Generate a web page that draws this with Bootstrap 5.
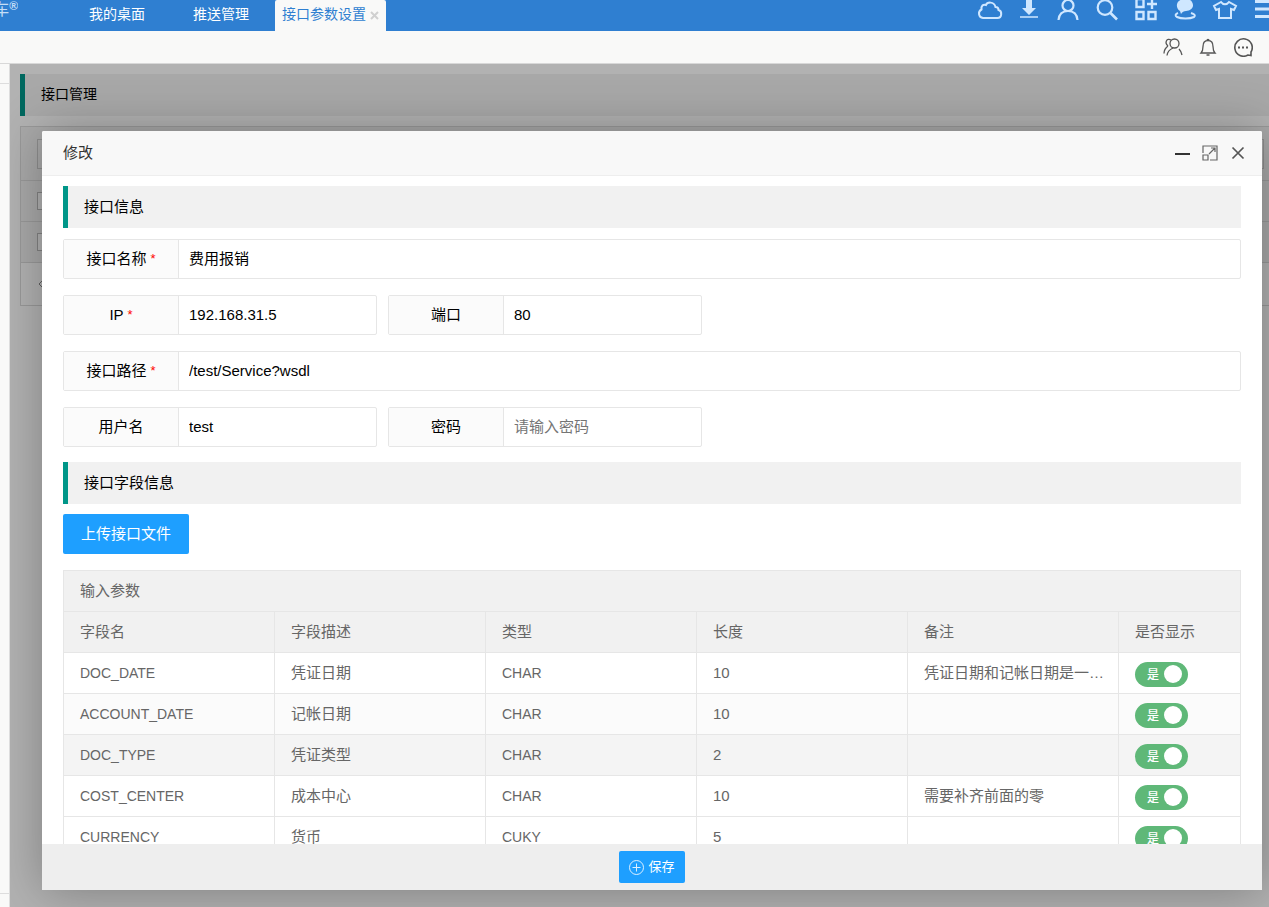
<!DOCTYPE html>
<html lang="zh-CN">
<head>
<meta charset="utf-8">
<meta name="viewport" content="width=device-width, initial-scale=1">
<title>接口参数设置</title>
<link href="https://cdn.jsdelivr.net/npm/bootstrap@5.3.0/dist/css/bootstrap.min.css" rel="stylesheet">
<style>
body{font-family:"Liberation Sans","Noto Sans CJK SC",sans-serif;font-size:14px;line-height:20px;color:#000;background:#fff}
svg{fill:none;stroke:currentColor;display:block;flex:none}
button{color:inherit}
.topbar{height:31px;background:#2f7fd1;color:#fff}
.brand{width:18px;height:31px;justify-content:flex-end;font-size:16px;color:#c5def6;white-space:nowrap}
.brand sup{font-size:12px;font-weight:700;top:0;line-height:12px}
.tabs{margin-left:54px}
.tabs a{color:#fff;text-decoration:none;line-height:29px;height:31px;padding:0 17px;margin-right:14px;white-space:nowrap}
.tabs a:nth-child(2){margin-right:9px}
.tabs .current{background:#f9f9f8;color:#2f7fd1;border-radius:2px 2px 0 0;padding:0 7px;margin:0;width:111px}
.top-icons{margin-right:-13px;color:#cfe7ff}
.top-icons button{width:39px;height:31px}
.plain{border:0;background:none;padding:0;display:flex;align-items:center;justify-content:center}
.subbar{height:33px;background:#f9f9f8;border-bottom:1px solid #d8d8d8;color:#555;padding-right:9px}
.subbar button{width:35px}
.side{width:10px;background:#f9f9f8;border-right:1px solid #ddd;padding:19px 0 13px}
.side div{border:solid #ddd;border-width:1px 0}
.stage{min-width:0;background:#fff}
.under{padding:10px 0 0 10px}
.sect{background:#f1f1f1;border-left:5px solid #009688;height:42px;line-height:42px;padding-left:16px;margin:0;font-size:15px;font-weight:400}
.under .sect{font-size:14px;line-height:40px}
.list-box{margin-top:10px;border:1px solid #dcdcdc;border-right:0;color:#888}
.list-box .line{height:41px;padding:0 5px 0 16px;border-bottom:1px solid #dcdcdc;background:#f2f2f2;display:flex;align-items:center;justify-content:space-between}
.list-box .line:first-child{height:54px}
.list-box .line:last-child{height:42px;border:0;background:#fff}
.list-box button{width:30px;height:30px;border:1px solid #ccc;background:none}
.list-box .plain{border:0;width:8px}
.list-box input{appearance:none;width:18px;height:18px;border:1px solid #bbb;margin:0;background:#fff}
.shade{inset:0;background:rgba(0,0,0,.3);padding:67px 7px 17px 32px}
.dlg{background:#fff;box-shadow:1px 1px 50px rgba(0,0,0,.3);border-radius:2px;min-width:0;min-height:0;font-size:15px}
.dlg-head{height:45px;background:#f8f8f8;border-bottom:1px solid #eee;padding:0 14px 0 21px;color:#333;border-radius:2px 2px 0 0}
.dlg-head h1{font-size:15px;font-weight:400;margin:0}
.dlg-head button{width:20px;height:20px}
.dlg-body{padding:10px 21px 0;min-height:0}
.rowset{margin:11px 0 15px;display:flex;flex-direction:column;gap:16px}
.pair{display:flex;gap:11px}
.fld{height:40px;border:1px solid #e6e6e6;border-radius:2px}
.fld.short{width:314px}
.fld label{width:115px;background:#fbfbfb;border-right:1px solid #e6e6e6;line-height:38px;text-align:center;flex:none}
.fld input{border:0;outline:0;padding:0 11px 0 10px;background:transparent;color:#000;min-width:0}
.fld input::placeholder{color:#757575;opacity:1}
.req{color:#f00;font-size:13px;vertical-align:1px}
.btn-blue{background:#1e9fff;color:#fff;border:0;border-radius:2px}
.btn-blue:hover{background:#3aabff;color:#fff}
.upload{height:40px;padding:0 18px;margin:10px 0 16px;font-size:15px}
.save{height:32px;width:66px;font-size:13px}
.grid{table-layout:fixed;border:1px solid #e6e6e6;color:#666;margin:0;width:100%;border-collapse:collapse}
.grid th,.grid td{border:1px solid #e6e6e6;height:41px;padding:0 12px 0 16px;font-weight:400;line-height:24px;white-space:nowrap;overflow:hidden;text-overflow:ellipsis;text-align:left}
.grid td:nth-child(odd):not(:nth-child(5)){font-size:14px}
.grid .c-show{width:122px}
.grid thead{background:#f1f1f1}
.grid tr.striped{background:#fbfbfb}
.grid tr.hovered{background:#f4f4f4}
.flip{width:53px;height:25px;margin-top:2px;position:relative;display:block}
.flip input{appearance:none;width:53px;height:25px;border-radius:13px;background:#5fb878;margin:0;display:flex;align-items:center;justify-content:flex-end;padding-right:6px}
.flip input::after{content:"";width:18px;height:18px;border-radius:50%;background:#fff}
.flip span{position:absolute;left:12px;top:1px;color:#fff;font-size:12px;font-weight:500;pointer-events:none}
.flip input:not(:checked){background:#ccc}
.dlg-foot{height:46px;background:#eee;flex:none}
</style>
</head>
<body>
<div class="d-flex flex-column vh-100 overflow-hidden">
  <header class="topbar d-flex flex-shrink-0">
    <div class="brand d-flex overflow-hidden flex-shrink-0"><span>车</span><sup>®</sup></div>
    <nav class="tabs d-flex">
      <a href="#">我的桌面</a>
      <a href="#">推送管理</a>
      <a href="#" class="current">接口参数设置 <svg class="d-inline-block" width="9" height="9" viewBox="0 0 9 9" stroke-width="2" style="color:#d0d0d0"><path d="M1 1l7 7M8 1L1 8"/></svg></a>
    </nav>
    <div class="top-icons d-flex ms-auto">
      <button class="plain" aria-label="云"><svg width="30" height="31" stroke-width="2"><path d="M8 18a4.500 4.500 0 0 1-1.500-8.500C6 6 8 4 11 5c1-3 8-4 9.500 2 2 0 3 1 3 3 4 1 3.500 8-1 8z"/></svg></button>
      <button class="plain" aria-label="下载"><svg width="30" height="31"><path d="M12 0h6v8h4l-7 7-7-7h4z" fill="currentColor" stroke="none"/><path d="M6 17h18" stroke-width="1.500"/></svg></button>
      <button class="plain" aria-label="用户"><svg width="30" height="31" stroke-width="2.200"><circle cx="15" cy="5.500" r="5.500"/><path d="M5.500 20c.5-6 4-9 9.500-9s9 3 9.500 9"/></svg></button>
      <button class="plain" aria-label="搜索"><svg width="30" height="31" stroke-width="2.200"><circle cx="13" cy="7.500" r="7.300"/><path d="M18.500 13l6.500 6.500" stroke-width="2.600"/></svg></button>
      <button class="plain" aria-label="应用"><svg width="30" height="31" stroke-width="2.400"><path d="M5.500-1h7v8h-7zM5.500 12h7v7h-7zM17.500 12h7v7h-7zM16 4h10M21-1v10"/></svg></button>
      <button class="plain" aria-label="消息"><svg width="30" height="31"><path d="M11 14l-1-3C6 9 6 3 9 1c3-3 11-3 13 1 3 5-1 9-6 9-2 0-4 1-5 3z" fill="currentColor" stroke="none"/><path d="M8 13c-3 1-3 3-1 4 4 2 13 2 17 0 2-2 0-3-3-4" stroke-width="2"/></svg></button>
      <button class="plain" aria-label="换肤"><svg width="30" height="31" stroke-width="2"><path d="M12 2L5 6l2 4 3-1v9h12V9l3 1 2-4-7-4c-2 3-6 3-8 0z"/></svg></button>
      <button class="plain" aria-label="菜单"><svg width="30" height="31" stroke-width="3"><path d="M7 1.500h22M7 9h22M7 16.500h22"/></svg></button>
    </div>
  </header>
  <div class="subbar d-flex flex-shrink-0 justify-content-end">
    <button class="plain" aria-label="联系人"><svg width="20" height="20" stroke-width="1.300"><circle cx="11.500" cy="6.500" r="4.500"/><path d="M8 3C4 .5 1 5.500 5 9M1 16.500c0-4 2-6 4-7.500M4 18.500c.5-4 2.500-6 6-7.500M16 12c1.500 1.500 2.500 3.500 3 6"/></svg></button>
    <button class="plain" aria-label="通知"><svg width="20" height="20" stroke-width="1.300"><path d="M3 16h14c-2-2-2-3.500-2-6.500 0-4-2-6-5-6s-5 2-5 6c0 3 0 4.500-2 6.500zM9 3.500a1 1 0 0 1 2 0M8.500 18h3"/></svg></button>
    <button class="plain" aria-label="对话"><svg width="20" height="20" stroke-width="1.600"><path d="M18 18.500V15a8.700 8.700 0 1 0-3 3l3 .5z"/><path d="M5 10.500h2M9 10.500h2M13 10.500h2" stroke-width="2"/></svg></button>
  </div>
  <div class="d-flex flex-grow-1 overflow-hidden">
    <aside class="side d-flex flex-shrink-0"><div class="w-100"></div></aside>
    <main class="stage flex-grow-1 position-relative overflow-hidden">
      <div class="under">
        <h2 class="sect">接口管理</h2>
        <div class="list-box">
          <div class="line"><button type="button" aria-label="筛选"></button><button type="button" aria-label="导出"></button></div>
          <div class="line"><input type="checkbox" aria-label="全选"></div>
          <div class="line"><input type="checkbox" aria-label="选择行"></div>
          <div class="line"><button type="button" class="plain" aria-label="上一页"><svg width="6" height="8"><path d="M5 0L1 4l4 4"/></svg></button></div>
        </div>
      </div>
      <div class="shade position-absolute d-flex">
        <section class="dlg d-flex flex-column flex-grow-1" role="dialog" aria-labelledby="dlgTitle">
          <div class="dlg-head d-flex align-items-center flex-shrink-0">
            <h1 id="dlgTitle">修改</h1>
            <div class="d-flex ms-auto gap-2">
              <button class="plain" aria-label="最小化"><svg width="16" height="16" stroke-width="2"><path d="M1 9h15"/></svg></button>
              <button class="plain" aria-label="最大化"><svg width="16" height="16" stroke-width="1.200" style="color:#666"><path d="M1 8V1h14v14H8M1 10h5v5H1zM7 9l6-6M9 3h4v4"/></svg></button>
              <button class="plain" aria-label="关闭"><svg width="14" height="14" stroke-width="1.700" style="color:#555"><path d="M1.500 1.500l11 11M12.500 1.500l-11 11"/></svg></button>
            </div>
          </div>
          <div class="dlg-body flex-grow-1 overflow-hidden">
            <h2 class="sect">接口信息</h2>
            <form class="rowset">
              <div class="fld d-flex"><label for="f1">接口名称 <span class="req">*</span></label><input id="f1" class="flex-grow-1" value="费用报销"></div>
              <div class="pair">
                <div class="fld short d-flex"><label for="f2">IP <span class="req">*</span></label><input id="f2" class="flex-grow-1" value="192.168.31.5"></div>
                <div class="fld short d-flex"><label for="f3">端口</label><input id="f3" class="flex-grow-1" value="80"></div>
              </div>
              <div class="fld d-flex"><label for="f4">接口路径 <span class="req">*</span></label><input id="f4" class="flex-grow-1" value="/test/Service?wsdl"></div>
              <div class="pair">
                <div class="fld short d-flex"><label for="f5">用户名</label><input id="f5" class="flex-grow-1" value="test"></div>
                <div class="fld short d-flex"><label for="f6">密码</label><input id="f6" type="password" class="flex-grow-1" placeholder="请输入密码"></div>
              </div>
            </form>
            <h2 class="sect">接口字段信息</h2>
            <button type="button" class="btn btn-blue upload">上传接口文件</button>
            <table class="grid">
              <colgroup><col><col><col><col><col><col class="c-show"></colgroup>
              <thead>
                <tr><th colspan="6">输入参数</th></tr>
                <tr><th>字段名</th><th>字段描述</th><th>类型</th><th>长度</th><th>备注</th><th>是否显示</th></tr>
              </thead>
              <tbody>
                <tr><td>DOC_DATE</td><td>凭证日期</td><td>CHAR</td><td>10</td><td>凭证日期和记帐日期是一样的</td><td><label class="flip"><input type="checkbox" role="switch" checked><span>是</span></label></td></tr>
                <tr class="striped"><td>ACCOUNT_DATE</td><td>记帐日期</td><td>CHAR</td><td>10</td><td></td><td><label class="flip"><input type="checkbox" role="switch" checked><span>是</span></label></td></tr>
                <tr class="hovered"><td>DOC_TYPE</td><td>凭证类型</td><td>CHAR</td><td>2</td><td></td><td><label class="flip"><input type="checkbox" role="switch" checked><span>是</span></label></td></tr>
                <tr><td>COST_CENTER</td><td>成本中心</td><td>CHAR</td><td>10</td><td>需要补齐前面的零</td><td><label class="flip"><input type="checkbox" role="switch" checked><span>是</span></label></td></tr>
                <tr><td>CURRENCY</td><td>货币</td><td>CUKY</td><td>5</td><td></td><td><label class="flip"><input type="checkbox" role="switch" checked><span>是</span></label></td></tr>
              </tbody>
            </table>
          </div>
          <div class="dlg-foot d-flex align-items-center justify-content-center">
            <button type="button" class="btn btn-blue save d-flex align-items-center justify-content-center p-0 gap-1"><svg width="15" height="15" stroke-width="1" opacity=".85"><circle cx="7.500" cy="7.500" r="7"/><path d="M7.500 3.500v8M3.500 7.500h8"/></svg>保存</button>
          </div>
        </section>
      </div>
    </main>
  </div>
</div>
<script src="https://cdn.jsdelivr.net/npm/bootstrap@5.3.0/dist/js/bootstrap.bundle.min.js"></script>
</body>
</html>
